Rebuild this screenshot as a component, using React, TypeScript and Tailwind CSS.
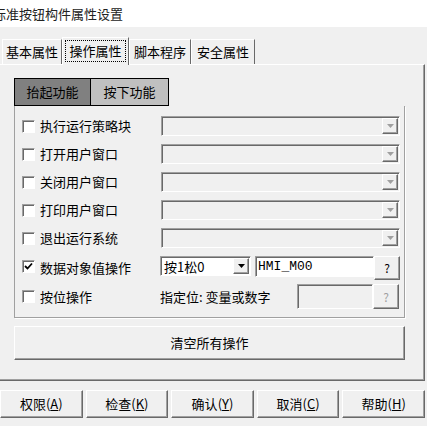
import React from 'react';

const raised =
  'border border-t-white border-l-white border-r-[#696969] border-b-[#696969] shadow-[inset_-1px_-1px_0_#a0a0a0]';
const sunken =
  'border border-t-[#a0a0a0] border-l-[#a0a0a0] border-r-white border-b-white shadow-[inset_1px_1px_0_#696969]';

function Arrow({ dim }: { dim?: boolean }) {
  return (
    <svg width="7" height="4" viewBox="0 0 7 4">
      <path d="M0 0h7L3.5 4z" fill={dim ? '#a0a0a0' : '#000'} />
    </svg>
  );
}

function Combo({ width, text, disabled }: { width: string; text?: string; disabled?: boolean }) {
  return (
    <div className={`flex h-[20px] items-stretch ${sunken} ${width} ${disabled ? 'bg-[#f0f0f0]' : 'bg-white'}`}>
      <div className="flex flex-1 items-center pl-[3px] text-[13px] leading-none">{text}</div>
      <div className={`m-[1px] flex w-[16px] items-center justify-center bg-[#f0f0f0] ${raised}`}>
        <Arrow dim={disabled} />
      </div>
    </div>
  );
}

function Check({ checked }: { checked?: boolean }) {
  return (
    <div className={`flex h-[13px] w-[13px] items-center justify-center bg-white ${sunken}`}>
      {checked && (
        <svg width="9" height="9" viewBox="0 0 9 9">
          <path d="M1 4l2.5 2.5L8 1.5" stroke="#000" strokeWidth="1.8" fill="none" />
        </svg>
      )}
    </div>
  );
}

function Row({ label, checked }: { label: string; checked?: boolean }) {
  return (
    <div className="flex h-[20px] items-center">
      <div className="ml-[7px] w-[18px]">
        <Check checked={checked} />
      </div>
      <span className="w-[121px] text-[13px]">{label}</span>
      <Combo width="w-[239px]" disabled />
    </div>
  );
}

function Btn({ label, k }: { label: string; k: string }) {
  return (
    <div className={`flex h-[28px] flex-1 items-center justify-center bg-[#f0f0f0] text-[13px] ${raised}`}>
      {label}(<span className="underline">{k}</span>)
    </div>
  );
}

export default function App() {
  const rows = ['执行运行策略块', '打开用户窗口', '关闭用户窗口', '打印用户窗口', '退出运行系统'];
  return (
    <div className="h-[426px] w-[427px] overflow-hidden bg-[#f0f0f0] font-['Noto_Sans_CJK_SC',sans-serif] text-black">
      {/* Title */}
      <div className="flex h-[27px] items-center bg-white pl-0 text-[13px]">
        <span className="-ml-[7px] text-[#222]">标准按钮构件属性设置</span>
      </div>

      {/* Tabs */}
      <div className="mt-[10px] flex h-[27px] items-end pl-[2px] text-[13px]">
        <div className={`flex h-[25px] w-[60px] items-center justify-center border border-b-0 border-t-white border-l-white border-r-[#696969]`}>基本属性</div>
        <div className="relative z-10 -mb-px flex h-[28px] w-[67px] items-center justify-center border border-b-0 border-t-white border-l-white border-r-[#696969] bg-[#f0f0f0] px-[2px] pb-[2px]">
          <div className="flex h-[22px] w-full items-center justify-center border border-dotted border-black">操作属性</div>
        </div>
        <div className="flex h-[25px] w-[62px] items-center justify-center border border-b-0 border-t-white border-l-white border-r-[#696969]">脚本程序</div>
        <div className="flex h-[25px] w-[64px] items-center justify-center border border-b-0 border-t-white border-l-white border-r-[#696969]">安全属性</div>
      </div>

      {/* Panel */}
      <div className="flex h-[317px] w-[425px] flex-col border-t border-r border-b border-t-white border-r-[#696969] border-b-[#696969] pl-[14px] pt-[13px] shadow-[inset_-1px_-1px_0_#a0a0a0]">
        <div className="flex h-[28px]">
          <div className="flex w-[77px] items-center justify-center border border-black bg-[#808080] text-[13px]">抬起功能</div>
          <div className="flex w-[78px] items-center justify-center border border-l-0 border-black bg-[#c0c0c0] text-[13px]">按下功能</div>
        </div>

        <div className="flex h-[212px] w-[391px] flex-col border border-t-0 border-[#a0a0a0] pt-[10px] shadow-[1px_1px_0_#fff]">
          <div className="flex flex-col gap-[8px]">
            {rows.map((r) => (
              <Row key={r} label={r} />
            ))}
          </div>

          <div className="mt-[8px] flex h-[23px] items-start">
            <div className="ml-[7px] mt-[4px] w-[18px]">
              <Check checked />
            </div>
            <span className="mt-[2px] w-[120px] text-[13px]">数据对象值操作</span>
            <Combo width="w-[91px]" text="按1松0" />
            <div className={`ml-[4px] flex h-[21px] w-[119px] items-center bg-white pl-[2px] font-['Liberation_Mono',monospace] text-[13px] leading-none ${sunken}`}>HMI_M00</div>
            <div className={`flex h-[24px] w-[26px] items-center justify-center bg-[#f0f0f0] text-[12px] ${raised}`}>?</div>
          </div>

          <div className="mt-[5px] flex h-[25px] items-center">
            <div className="ml-[7px] w-[18px]">
              <Check />
            </div>
            <span className="w-[120px] text-[13px]">按位操作</span>
            <span className="w-[137px] text-[13px]">指定位: 变量或数字</span>
            <div className={`h-[25px] w-[76px] bg-[#f0f0f0] ${sunken}`} />
            <div className={`flex h-[25px] w-[26px] items-center justify-center bg-[#f0f0f0] text-[12px] text-[#a0a0a0] ${raised}`}>?</div>
          </div>
        </div>

        <div className={`mt-[8px] flex h-[34px] w-[391px] items-center justify-center text-[13px] ${raised}`}>清空所有操作</div>
      </div>

      {/* Bottom buttons */}
      <div className="mt-[9px] flex gap-[3px] pr-[2px]">
        <Btn label="权限" k="A" />
        <Btn label="检查" k="K" />
        <Btn label="确认" k="Y" />
        <Btn label="取消" k="C" />
        <Btn label="帮助" k="H" />
      </div>
    </div>
  );
}
